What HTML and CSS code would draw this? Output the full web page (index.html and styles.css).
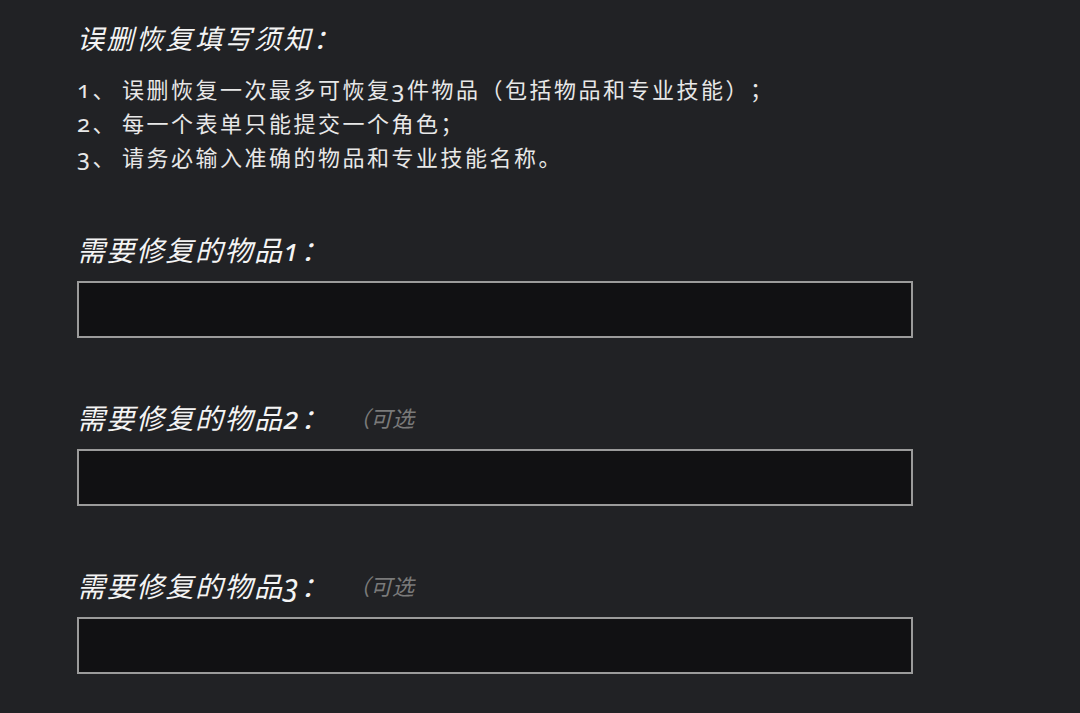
FILE: index.html
```html
<!DOCTYPE html>
<html lang="zh-CN">
<head>
  <meta charset="UTF-8">
  <meta name="viewport" content="width=device-width, initial-scale=1.0">
  <title>误删恢复</title>
  <link rel="stylesheet" href="styles.css">
</head>
<body>
  <div class="page">
    <!-- 须知 -->
    <h1 class="notice-title">误删恢复填写须知：</h1>
    <div class="rules">
      <p class="rule"><span class="rule-num"><span class="num">1</span>、</span>误删恢复一次最多可恢复<span class="num">3</span>件物品（包括物品和专业技能）；</p>
      <p class="rule"><span class="rule-num"><span class="num">2</span>、</span>每一个表单只能提交一个角色；</p>
      <p class="rule"><span class="rule-num"><span class="num">3</span>、</span>请务必输入准确的物品和专业技能名称。</p>
    </div>

    <!-- 物品输入 -->
    <div class="field field-first">
      <label class="field-label" for="item1">需要修复的物品<span class="num">1</span>：</label>
      <input class="item-input" id="item1" type="text">
    </div>
    <div class="field">
      <label class="field-label" for="item2">需要修复的物品<span class="num">2</span>：<span class="optional">（可选</span></label>
      <input class="item-input" id="item2" type="text">
    </div>
    <div class="field">
      <label class="field-label" for="item3">需要修复的物品<span class="num">3</span>：<span class="optional">（可选</span></label>
      <input class="item-input" id="item3" type="text">
    </div>
  </div>
</body>
</html>
```

FILE: styles.css
```css
/* 页面 */
body {
  margin: 0;
  background-color: #212225;
  color: #f0f0f0;
  font-family: "Noto Sans CJK SC", sans-serif;
  text-spacing-trim: space-all;
}
.page {
  padding: 21px 0 0 77px;
}
/* 老式数字 */
.num {
  font-family: "Noto Sans", sans-serif;
  font-variant-numeric: oldstyle-nums;
  font-size: 1.08em;
}
/* 须知标题 */
.notice-title {
  margin: 0;
  font-size: 27px;
  line-height: 34px;
  font-weight: normal;
  font-style: italic;
  letter-spacing: 2.5px;
  color: #f4f4f4;
}
.rules {
  margin-top: 17px;
}
.rule {
  margin: 0;
  font-size: 22px;
  line-height: 33px;
  letter-spacing: 2.5px;
  color: #e8e8e8;
}
.rule-num {
  margin-right: 5px;
}
/* 输入项 */
.field {
  margin-top: 62px;
}
.field-first {
  margin-top: 58px;
}
.field-label {
  display: block;
  height: 34px;
  font-size: 28px;
  line-height: 34px;
  font-style: italic;
  letter-spacing: 1.5px;
  color: #f4f4f4;
}
.optional {
  margin-left: 18px;
  font-size: 22px;
  letter-spacing: 0;
  vertical-align: top;
  color: #7a7a7a;
}
.item-input {
  display: block;
  box-sizing: border-box;
  width: 836px;
  height: 57px;
  margin-top: 15px;
  background-color: #111113;
  border: 2px solid #9b9b9b;
  border-radius: 0;
  outline: none;
  color: #f0f0f0;
  font-size: 20px;
  padding: 0 12px;
}
```
